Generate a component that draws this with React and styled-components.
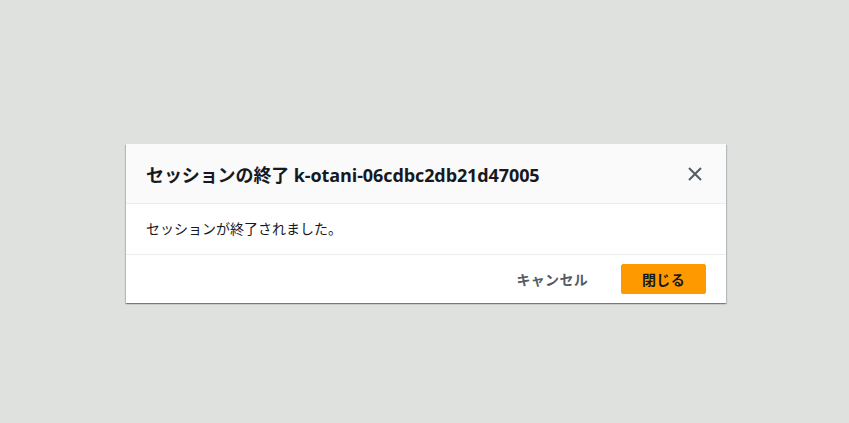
import React from "react";
import styled, { createGlobalStyle } from "styled-components";

const Global = createGlobalStyle`
  html, body { margin: 0; padding: 0; }
  body {
    background: #dfe1df;
    font-family: "Open Sans", "Noto Sans CJK JP", sans-serif;
    color: #16191f;
  }
`;

const Page = styled.div`
  width: 849px;
  height: 423px;
  display: flex;
  justify-content: flex-start;
  align-items: flex-start;
  padding: 144px 0 0 126px;
  box-sizing: border-box;
`;

const Dialog = styled.div`
  width: 600px;
  background: #fff;
  box-shadow: 0 1px 1px 0 rgba(0, 28, 36, 0.3), 1px 1px 1px 0 rgba(0, 28, 36, 0.15),
    -1px 1px 1px 0 rgba(0, 28, 36, 0.15);
  display: flex;
  flex-direction: column;
`;

const Header = styled.div`
  height: 60px;
  box-sizing: border-box;
  background: #fafafa;
  border-bottom: 1px solid #eaeded;
  display: flex;
  align-items: center;
  justify-content: space-between;
  padding: 0 20px;
`;

const Title = styled.h2`
  margin: 0;
  font-size: 18px;
  font-weight: 700;
  color: #16191f;
  letter-spacing: -0.1px;
  padding-top: 1px;
`;

const CloseButton = styled.button`
  border: 0;
  background: none;
  padding: 0;
  width: 20px;
  height: 20px;
  display: flex;
  align-items: center;
  justify-content: center;
  color: #545b64;
  cursor: pointer;
  margin-right: 1px;
`;

const Body = styled.div`
  height: 51px;
  box-sizing: border-box;
  border-bottom: 1px solid #eaeded;
  display: flex;
  align-items: center;
  padding: 0 20px 2px;
  font-size: 14px;
  color: #16191f;
`;

const Footer = styled.div`
  height: 48px;
  display: flex;
  align-items: center;
  justify-content: flex-end;
  gap: 12px;
  padding: 0 20px;
`;

const Button = styled.button`
  height: 30px;
  padding: 0 ${(p) => (p.primary ? "0" : "20px")};
  width: ${(p) => (p.primary ? "85px" : "auto")};
  border-radius: 2px;
  border: 1px solid ${(p) => (p.primary ? "#ff9900" : "transparent")};
  background: ${(p) => (p.primary ? "#ff9900" : "transparent")};
  color: ${(p) => (p.primary ? "#16191f" : "#545b64")};
  font-family: "Open Sans", "Noto Sans CJK JP", sans-serif;
  font-size: 14px;
  font-weight: 700;
  white-space: nowrap;
  cursor: pointer;
  letter-spacing: 0.3px;
`;

export default function App() {
  return (
    <>
      <Global />
      <Page>
        <Dialog>
          <Header>
            <Title>セッションの終了 k-otani-06cdbc2db21d47005</Title>
            <CloseButton aria-label="閉じる">
              <svg width="16" height="16" viewBox="0 0 16 16" fill="none">
                <path d="M2 2l12 12M14 2L2 14" stroke="currentColor" strokeWidth="2" />
              </svg>
            </CloseButton>
          </Header>
          <Body>セッションが終了されました。</Body>
          <Footer>
            <Button>キャンセル</Button>
            <Button primary>閉じる</Button>
          </Footer>
        </Dialog>
      </Page>
    </>
  );
}
